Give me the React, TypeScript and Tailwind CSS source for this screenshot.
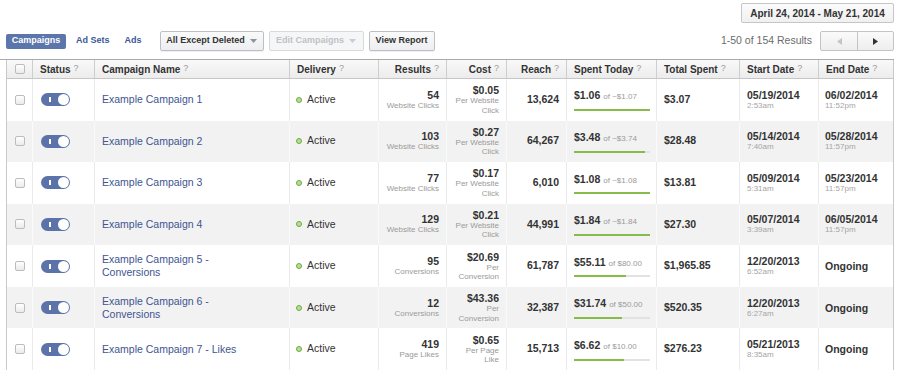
import React from "react"

type Row = {
  name: string
  results: string
  resultLabel: string
  cost: string
  costLabel: string[]
  reach: string
  spent: string
  budget: string
  pct: number
  total: string
  start: string
  startTime: string
  end: string
  endTime?: string
}

const rows: Row[] = [
  { name: "Example Campaign 1", results: "54", resultLabel: "Website Clicks", cost: "$0.05", costLabel: ["Per Website", "Click"], reach: "13,624", spent: "$1.06", budget: "of ~$1.07", pct: 100, total: "$3.07", start: "05/19/2014", startTime: "2:53am", end: "06/02/2014", endTime: "11:52pm" },
  { name: "Example Campaign 2", results: "103", resultLabel: "Website Clicks", cost: "$0.27", costLabel: ["Per Website", "Click"], reach: "64,267", spent: "$3.48", budget: "of ~$3.74", pct: 93, total: "$28.48", start: "05/14/2014", startTime: "7:40am", end: "05/28/2014", endTime: "11:57pm" },
  { name: "Example Campaign 3", results: "77", resultLabel: "Website Clicks", cost: "$0.17", costLabel: ["Per Website", "Click"], reach: "6,010", spent: "$1.08", budget: "of ~$1.08", pct: 100, total: "$13.81", start: "05/09/2014", startTime: "5:31am", end: "05/23/2014", endTime: "11:57pm" },
  { name: "Example Campaign 4", results: "129", resultLabel: "Website Clicks", cost: "$0.21", costLabel: ["Per Website", "Click"], reach: "44,991", spent: "$1.84", budget: "of ~$1.84", pct: 100, total: "$27.30", start: "05/07/2014", startTime: "3:39am", end: "06/05/2014", endTime: "11:57pm" },
  { name: "Example Campaign 5 - Conversions", results: "95", resultLabel: "Conversions", cost: "$20.69", costLabel: ["Per", "Conversion"], reach: "61,787", spent: "$55.11", budget: "of $80.00", pct: 69, total: "$1,965.85", start: "12/20/2013", startTime: "6:52am", end: "Ongoing" },
  { name: "Example Campaign 6 - Conversions", results: "12", resultLabel: "Conversions", cost: "$43.36", costLabel: ["Per", "Conversion"], reach: "32,387", spent: "$31.74", budget: "of $50.00", pct: 63, total: "$520.35", start: "12/20/2013", startTime: "6:27am", end: "Ongoing" },
  { name: "Example Campaign 7 - Likes", results: "419", resultLabel: "Page Likes", cost: "$0.65", costLabel: ["Per Page", "Like"], reach: "15,713", spent: "$6.62", budget: "of $10.00", pct: 66, total: "$276.23", start: "05/21/2013", startTime: "8:35am", end: "Ongoing" },
]

const cols = "grid grid-cols-[26px_62px_195px_89px_68px_60px_60px_90px_83px_79px_74px]"

function Checkbox() {
  return <span className="block h-[10px] w-[10px] rounded-[2px] border border-[#bcbcbc] bg-gradient-to-b from-white to-[#ebebeb]" />
}

function Toggle() {
  return (
    <div className="flex h-[13px] w-[29px] items-center justify-between rounded-full bg-[#5b73a9] pl-[8px] pr-[1px]">
      <span className="h-[5px] w-[1.5px] bg-white" />
      <span className="h-[11px] w-[11px] rounded-full bg-white" />
    </div>
  )
}

function Caret({ color }: { color: string }) {
  return (
    <svg width="7" height="4" viewBox="0 0 7 4" className="ml-[5px]">
      <path d="M0 0h7L3.5 4z" fill={color} />
    </svg>
  )
}

function HeadCell({ label, right, last }: { label: string; right?: boolean; last?: boolean }) {
  return (
    <div className={`flex items-center px-[7px] ${right ? "justify-end" : ""} ${last ? "" : "border-r border-[#cecece]"}`}>
      <span className="font-bold text-[#333]">{label}</span>
      <span className="ml-[3px] text-[9px] text-[#9a9a9a]">?</span>
    </div>
  )
}

export default function App() {
  return (
    <div className="h-[370px] w-[900px] overflow-hidden bg-white font-['Liberation_Sans',Arial,sans-serif] text-[#333]">
      <div className="ml-[6px] w-[888px]">
        <div className="flex justify-end pt-[3px]">
          <div className="flex h-[20px] w-[153px] items-center justify-center rounded-[2px] border border-[#c6c6c6] bg-gradient-to-b from-[#fbfbfb] to-[#f0f0f0] text-[10px] font-bold text-[#333]">
            April 24, 2014 - May 21, 2014
          </div>
        </div>

        <div className="mt-[8px] flex h-[20px] items-center justify-between text-[9px] font-bold">
          <div className="flex items-center">
            <div className="flex h-[15px] w-[60px] items-center justify-center rounded-[2px] bg-[#5c75aa] text-white">Campaigns</div>
            <span className="ml-[10px] text-[#3b5998]">Ad Sets</span>
            <span className="ml-[15px] text-[#3b5998]">Ads</span>
            <div className="ml-[18px] flex h-[20px] w-[104px] items-center justify-center rounded-[2px] border border-[#bdbfc3] bg-gradient-to-b from-[#fafafa] to-[#eceef1] text-[#333] shadow-[0_1px_0_rgba(0,0,0,0.06)]">
              All Except Deleted
              <Caret color="#8d949e" />
            </div>
            <div className="ml-[5px] flex h-[20px] w-[95px] items-center justify-center rounded-[2px] border border-[#d8d9db] bg-[#f5f6f7] text-[#bfc2c7]">
              Edit Campaigns
              <Caret color="#c9ccd1" />
            </div>
            <div className="ml-[5px] flex h-[20px] w-[66px] items-center justify-center rounded-[2px] border border-[#bdbfc3] bg-gradient-to-b from-[#fafafa] to-[#eceef1] text-[#333] shadow-[0_1px_0_rgba(0,0,0,0.06)]">
              View Report
            </div>
          </div>
          <div className="flex items-center">
            <span className="text-[10.5px] font-normal text-[#6b6b6b]">1-50 of 154 Results</span>
            <div className="ml-[8px] flex h-[20px] w-[74px] rounded-[2px] border border-[#c4c4c4] bg-gradient-to-b from-[#fafafa] to-[#eeeeee]">
              <div className="flex w-[37px] items-center justify-center border-r border-[#c4c4c4]">
                <svg width="5" height="7" viewBox="0 0 5 7"><path d="M5 0v7L0 3.5z" fill="#c4c4c4" /></svg>
              </div>
              <div className="flex flex-1 items-center justify-center">
                <svg width="5" height="7" viewBox="0 0 5 7"><path d="M0 0v7l5-3.5z" fill="#333" /></svg>
              </div>
            </div>
          </div>
        </div>
      </div>

      <div className="mt-[8px] h-px w-[894px] bg-[#ababab]" />

      <div className="ml-[6px] w-[888px] border-x border-[#c9c9c9] text-[10.5px]">
        <div className={`${cols} h-[19px] border-b border-[#c6c6c6] bg-gradient-to-b from-[#f9f9f9] to-[#ececec] text-[10px]`}>
          <div className="flex items-center justify-center border-r border-[#cecece]"><Checkbox /></div>
          <HeadCell label="Status" />
          <HeadCell label="Campaign Name" />
          <HeadCell label="Delivery" />
          <HeadCell label="Results" right />
          <HeadCell label="Cost" right />
          <HeadCell label="Reach" right />
          <HeadCell label="Spent Today" />
          <HeadCell label="Total Spent" />
          <HeadCell label="Start Date" />
          <HeadCell label="End Date" last />
        </div>

        {rows.map((r, i) => {
          const shaded = i % 2 === 1
          const sep = shaded ? "border-r border-[#fafafa]" : "border-r border-[#ebebeb]"
          return (
            <div key={r.name} className={`${cols} h-[41.57px] ${shaded ? "bg-[#f2f2f2]" : "bg-white"}`}>
              <div className={`flex items-center justify-center ${sep}`}><Checkbox /></div>
              <div className={`flex items-center pl-[8px] ${sep}`}><Toggle /></div>
              <div className={`flex items-center px-[7px] ${sep}`}>
                <span className="max-w-[150px] leading-[13px] text-[#3e5591]">{r.name}</span>
              </div>
              <div className={`flex items-center px-[6px] ${sep}`}>
                <span className="h-[6px] w-[6px] rounded-full border-[1.5px] border-[#69ad3b] bg-[#b9dc96]" />
                <span className="ml-[5px]">Active</span>
              </div>
              <div className={`flex flex-col items-end justify-center px-[7px] ${sep}`}>
                <span className="font-bold leading-[12px]">{r.results}</span>
                <span className="text-[8px] leading-[10px] text-[#9a9a9a]">{r.resultLabel}</span>
              </div>
              <div className={`flex flex-col items-end justify-center px-[7px] text-right ${sep}`}>
                <span className="font-bold leading-[12px]">{r.cost}</span>
                {r.costLabel.map((l) => (
                  <span key={l} className="text-[8px] leading-[9.5px] text-[#9a9a9a]">{l}</span>
                ))}
              </div>
              <div className={`flex items-center justify-end px-[7px] font-bold ${sep}`}>{r.reach}</div>
              <div className={`flex flex-col justify-center px-[7px] ${sep}`}>
                <div className="flex items-baseline">
                  <span className="font-bold">{r.spent}</span>
                  <span className="ml-[3px] text-[8px] text-[#9a9a9a]">{r.budget}</span>
                </div>
                <div className="mt-[5px] h-[2px] w-[76px] bg-[#e2e2e2]">
                  <div className="h-full bg-[#86bd4a]" style={{ width: `${r.pct}%` }} />
                </div>
              </div>
              <div className={`flex items-center px-[7px] font-bold ${sep}`}>{r.total}</div>
              <div className={`flex flex-col justify-center px-[7px] ${sep}`}>
                <span className="font-bold leading-[12px]">{r.start}</span>
                <span className="text-[8px] leading-[10px] text-[#a5a5a5]">{r.startTime}</span>
              </div>
              <div className="flex flex-col justify-center px-[6px]">
                <span className="font-bold leading-[12px]">{r.end}</span>
                {r.endTime && <span className="text-[8px] leading-[10px] text-[#a5a5a5]">{r.endTime}</span>}
              </div>
            </div>
          )
        })}
      </div>
    </div>
  )
}
